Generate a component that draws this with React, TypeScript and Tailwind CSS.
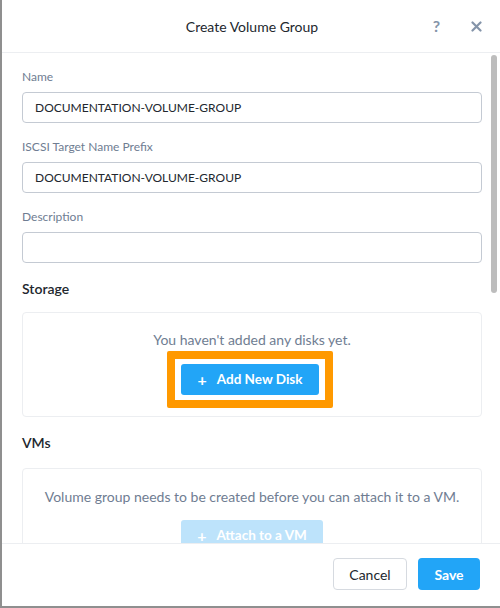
import React from "react";

function Field({ label, value }: { label: string; value: string }) {
  return (
    <div className="flex flex-col">
      <label className="text-[12px] leading-[16px] text-[#6f7d92] mb-[7px]">{label}</label>
      <div className="h-[31px] rounded-[4px] border border-[#c4cad3] flex items-center px-[12px] text-[12px] text-[#22272e]">
        {value}
      </div>
    </div>
  );
}

export default function App() {
  return (
    <div
      className="w-[500px] h-[608px] bg-white border-l-2 border-b-2 border-[#8f8f8f] flex flex-col overflow-hidden"
      style={{ fontFamily: "Lato, 'Open Sans', sans-serif" }}
    >
      <div className="h-[53px] shrink-0 border-b border-[#eceef1] flex items-center relative">
        <div className="flex-1 text-center text-[14px] text-[#22272e] pl-[2px]">Create Volume Group</div>
        <div className="absolute right-[18px] top-0 h-full flex items-center gap-[31px] text-[#8494a9] font-bold">
          <span className="text-[16px]">?</span>
          <svg width="11" height="11" viewBox="0 0 11 11">
            <path d="M1.5 1.5 L9.5 9.5 M9.5 1.5 L1.5 9.5" stroke="#8494a9" strokeWidth="2.2" strokeLinecap="round" />
          </svg>
        </div>
      </div>

      <div className="flex-1 relative overflow-hidden">
        <div className="pl-[20px] pr-[18px] pt-[16px] flex flex-col">
          <div className="flex flex-col gap-[16px]">
            <Field label="Name" value="DOCUMENTATION-VOLUME-GROUP" />
            <Field label="ISCSI Target Name Prefix" value="DOCUMENTATION-VOLUME-GROUP" />
            <Field label="Description" value="" />
          </div>

          <div className="mt-[17px] text-[14px] font-semibold text-[#22272e] leading-[18px]">Storage</div>
          <div className="mt-[14px] h-[105px] rounded-[4px] border border-[#eceef1] flex flex-col items-center pt-[18px]">
            <div className="text-[14px] text-[#6f7d92] leading-[17px]">You haven't added any disks yet.</div>
            <div className="mt-[3px] mr-[4px] border-[8px] border-[#ff9900] rounded-[2px] bg-white py-[5px] px-[6px]">
              <div className="h-[31px] w-[138px] rounded-[3px] bg-[#22a5f7] text-white text-[13.5px] font-bold flex items-center justify-center gap-[10px]">
                <span className="text-[16px] leading-none">+</span>
                <span>Add New Disk</span>
              </div>
            </div>
          </div>

          <div className="mt-[17px] text-[14px] font-semibold text-[#22272e] leading-[18px]">VMs</div>
          <div className="mt-[16px] h-[110px] rounded-[4px] border border-[#eceef1] flex flex-col items-center pt-[19px]">
            <div className="text-[14px] text-[#6f7d92] leading-[17px]">
              Volume group needs to be created before you can attach it to a VM.
            </div>
            <div className="mt-[15px] h-[31px] w-[142px] rounded-[3px] bg-[#bde3fb] text-white text-[13.5px] font-bold flex items-center justify-center gap-[10px]">
              <span className="text-[16px] leading-none">+</span>
              <span>Attach to a VM</span>
            </div>
          </div>
        </div>
        <div className="absolute right-[3px] top-[2px] w-[6px] h-[238px] rounded-full bg-[#bdbdbd]" />
      </div>

      <div className="h-[63px] shrink-0 border-t border-[#eceef1] flex items-center justify-end gap-[11px] pr-[20px] pb-[2px]">
        <div className="h-[32px] w-[74px] rounded-[4px] border border-[#d6dae0] flex items-center justify-center text-[14px] text-[#22272e]">
          Cancel
        </div>
        <div className="h-[32px] w-[62px] rounded-[4px] bg-[#22a5f7] flex items-center justify-center text-[14px] font-bold text-white">
          Save
        </div>
      </div>
    </div>
  );
}
